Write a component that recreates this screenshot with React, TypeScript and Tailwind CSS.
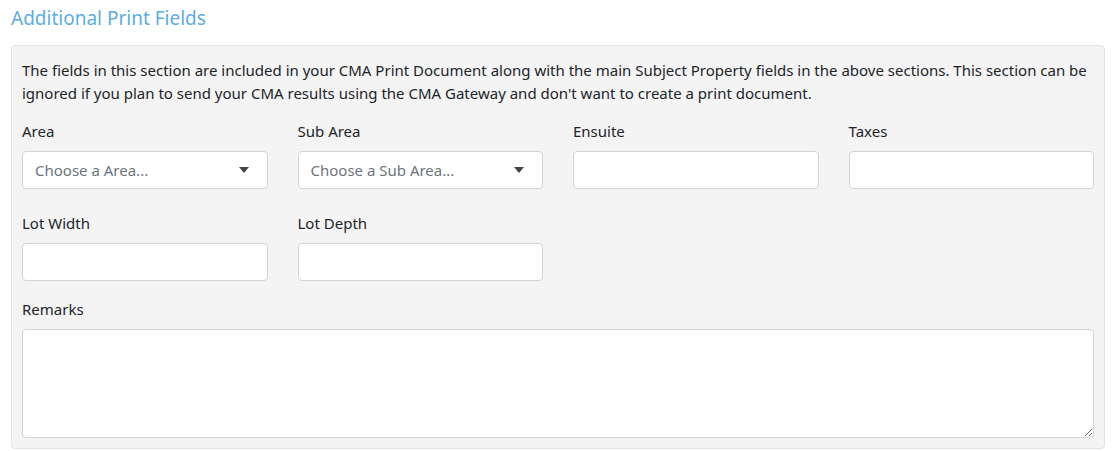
import { ReactNode } from "react";

function Field({ label, children }: { label: string; children: ReactNode }) {
  return (
    <div className="flex flex-col">
      <label className="mb-2 leading-[23px]">{label}</label>
      {children}
    </div>
  );
}

function Select({ placeholder }: { placeholder: string }) {
  return (
    <div className="flex h-[38px] items-center justify-between rounded border border-[#ced4da] bg-white pl-3 pr-[18px] text-[#6c757d]">
      <span>{placeholder}</span>
      <svg width="10" height="6" viewBox="0 0 10 6" className="fill-[#444]">
        <path d="M0 0h10L5 6z" />
      </svg>
    </div>
  );
}

function TextInput() {
  return <input className="h-[38px] w-full rounded border border-[#ced4da] bg-white px-3" />;
}

export default function App() {
  return (
    <div className="bg-white pl-[11px] pr-[9px] pt-[5px] pb-[2px] text-[15px] text-[#212529] font-['Noto_Sans',sans-serif]">
      <h4 className="mb-[13px] text-[19px] leading-[27px] text-[#5dade2]">Additional Print Fields</h4>
      <div className="rounded border border-[#e3e3e3] bg-[#f4f4f4] px-[10px] pt-[13px] pb-[10px]">
        <p className="mb-[15px] leading-[23px]">
          The fields in this section are included in your CMA Print Document along with the main Subject Property
          fields in the above sections. This section can be ignored if you plan to send your CMA results using the
          CMA Gateway and don't want to create a print document.
        </p>
        <div className="grid grid-cols-4 gap-x-[30px] gap-y-[23px]">
          <Field label="Area">
            <Select placeholder="Choose a Area..." />
          </Field>
          <Field label="Sub Area">
            <Select placeholder="Choose a Sub Area..." />
          </Field>
          <Field label="Ensuite">
            <TextInput />
          </Field>
          <Field label="Taxes">
            <TextInput />
          </Field>
          <Field label="Lot Width">
            <TextInput />
          </Field>
          <Field label="Lot Depth">
            <TextInput />
          </Field>
        </div>
        <div className="mt-[17px]">
          <Field label="Remarks">
            <textarea className="block h-[109px] w-full rounded border border-[#ced4da] bg-white px-3 py-1.5" />
          </Field>
        </div>
      </div>
    </div>
  );
}
